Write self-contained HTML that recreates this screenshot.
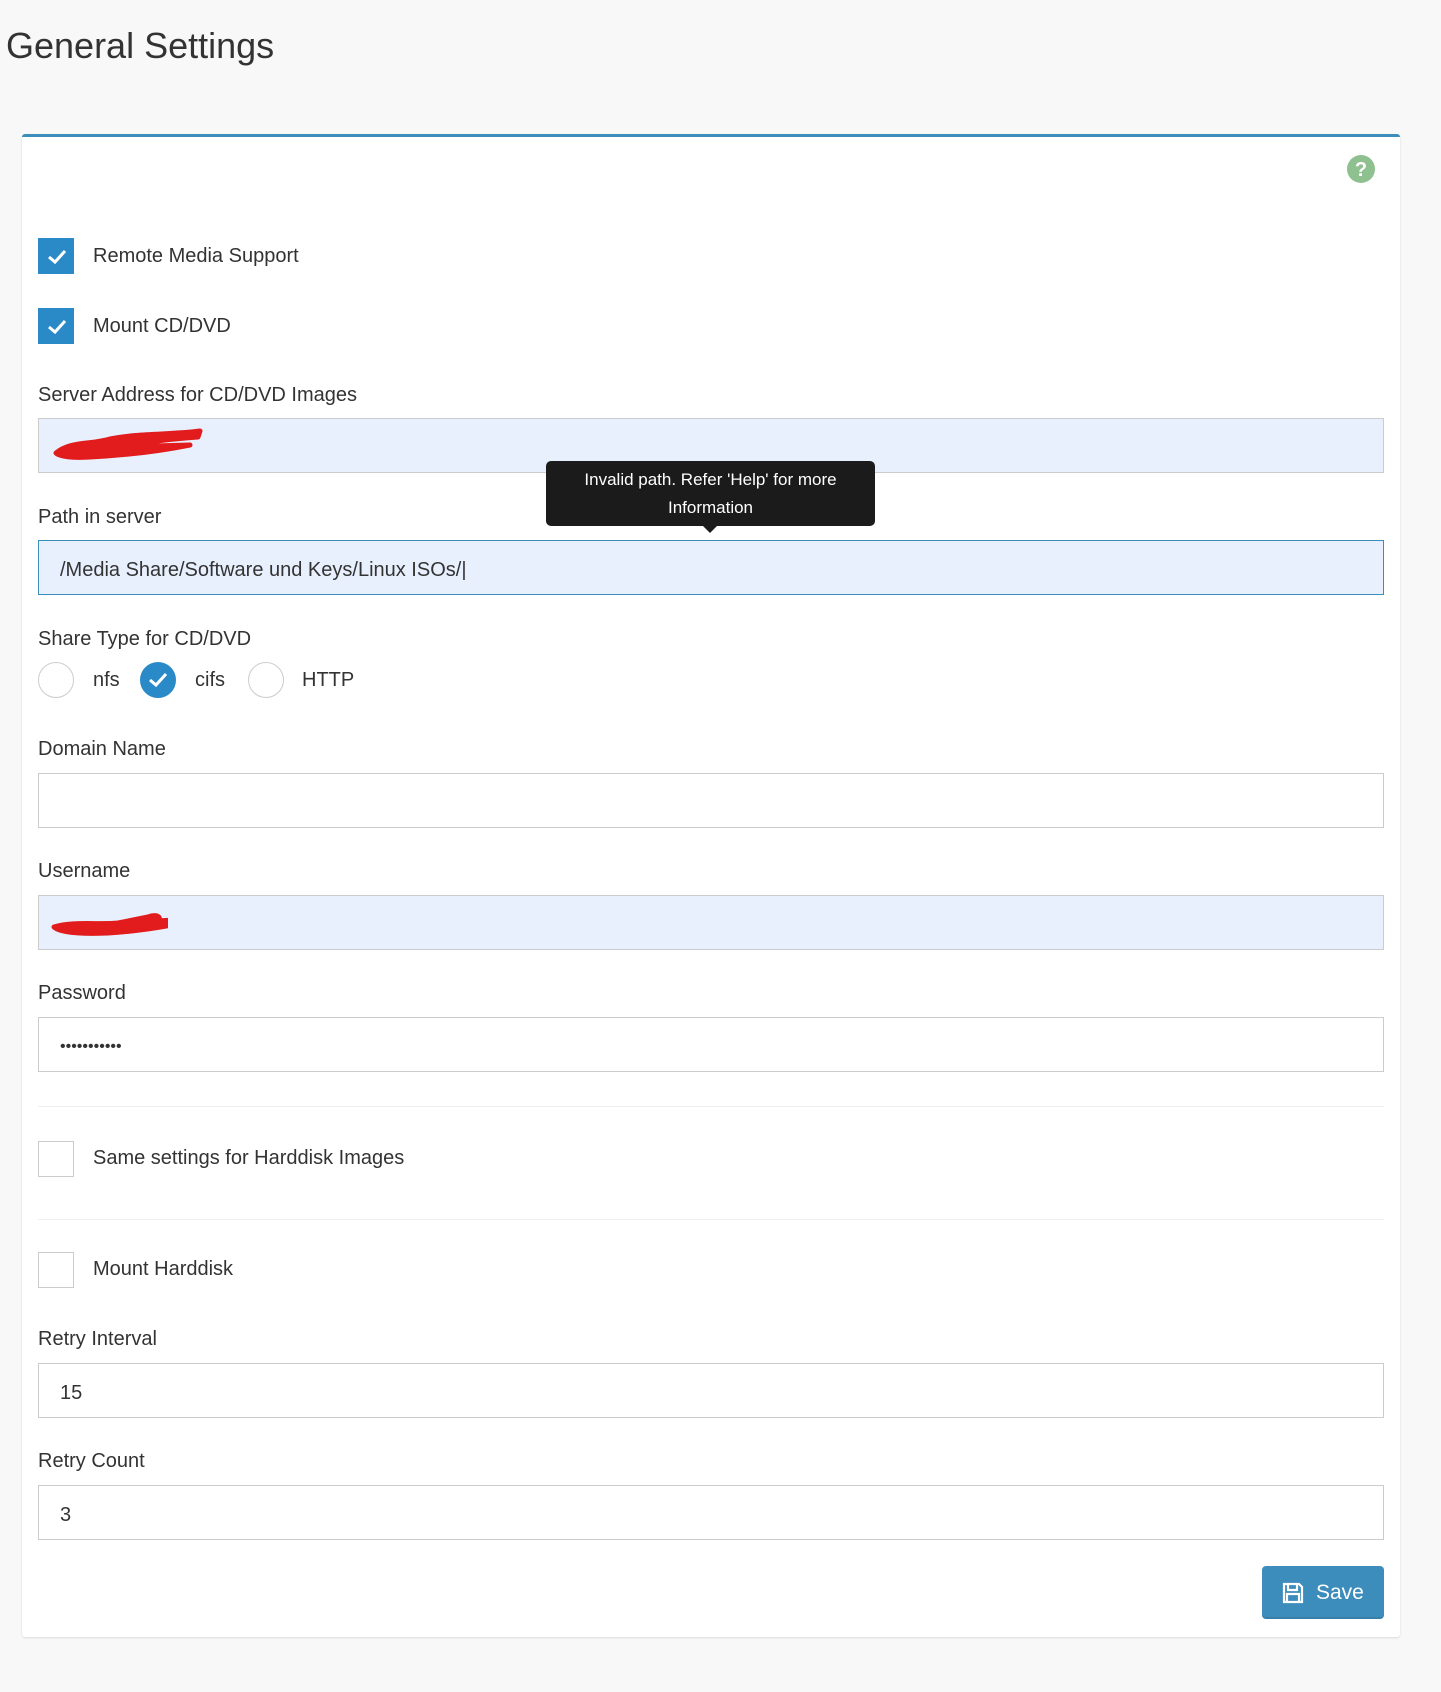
<!DOCTYPE html>
<html><head><meta charset="utf-8"><style>
body{margin:0;width:1441px;height:1692px;background:#f8f8f8;font-family:"Liberation Sans",sans-serif;color:#333;position:relative;overflow:hidden}
.a{position:absolute}
h1{position:absolute;left:6px;top:25px;margin:0;font-weight:normal;font-size:36px;color:#333}
.card{left:22px;top:134px;width:1378px;height:1503px;background:#fff;border-top:3px solid #3c8dbc;border-radius:3px;box-shadow:0 1px 2px rgba(0,0,0,.12);box-sizing:border-box}
.lbl{font-size:20px;color:#333;line-height:24px}
.cb{width:36px;height:36px;box-sizing:border-box;border:1px solid #ccc;background:#fff}
.cb.on{background:#2a8ac8;border-color:#2a8ac8}
.in{left:38px;width:1346px;height:55px;box-sizing:border-box;border:1px solid #ccc;background:#fff;font-size:20px;padding-left:21px;line-height:58px}
.blue{background:#e8f0fe}
.rd{width:36px;height:36px;border-radius:50%;border:1px solid #ccc;box-sizing:border-box;background:#fff}
.hr{left:38px;width:1346px;height:1px;background:#eee}
</style></head><body>
<h1>General Settings</h1>
<div class="a card"></div>
<svg class="a" style="left:1347px;top:155px" width="28" height="28" viewBox="0 0 28 28"><circle cx="14" cy="14" r="14" fill="#8fc08f"/><text x="14" y="21" font-size="20" font-weight="bold" fill="#fff" text-anchor="middle" font-family="Liberation Sans">?</text></svg>

<div class="a cb on" style="left:38px;top:238px"><svg width="36" height="36"><path d="M10 18l6 5 10-11" stroke="#fff" stroke-width="3" fill="none"/></svg></div>
<div class="a lbl" style="left:93px;top:244px">Remote Media Support</div>
<div class="a cb on" style="left:38px;top:308px"><svg width="36" height="36"><path d="M10 18l6 5 10-11" stroke="#fff" stroke-width="3" fill="none"/></svg></div>
<div class="a lbl" style="left:93px;top:314px">Mount CD/DVD</div>

<div class="a lbl" style="left:38px;top:383px">Server Address for CD/DVD Images</div>
<div class="a in blue" style="top:418px"></div>
<svg class="a" style="left:50px;top:425px" width="160" height="40"><path d="M6 28 C20 16,40 20,60 14 C90 8,120 10,150 6 L148 12 C120 14,90 18,70 22 L140 20 C110 26,80 30,40 32 C25 33,10 32,6 28Z" fill="#e21c1c" stroke="#e21c1c" stroke-width="5" stroke-linejoin="round"/></svg>

<div class="a lbl" style="left:38px;top:505px">Path in server</div>
<div class="a in blue" style="top:540px;border-color:#3c8dbc">/Media Share/Software und Keys/Linux ISOs/|</div>

<div class="a" style="left:546px;top:461px;width:329px;height:65px;background:#1b1b1b;border-radius:5px;color:#fff;font-size:17px;line-height:28px;text-align:center;padding-top:5px;box-sizing:border-box">Invalid path. Refer 'Help' for more<br>Information</div>
<div class="a" style="left:703px;top:526px;width:0;height:0;border-left:7px solid transparent;border-right:7px solid transparent;border-top:7px solid #1b1b1b"></div>

<div class="a lbl" style="left:38px;top:627px">Share Type for CD/DVD</div>
<div class="a rd" style="left:38px;top:662px"></div>
<div class="a lbl" style="left:93px;top:668px">nfs</div>
<div class="a rd" style="left:140px;top:662px;background:#2a8ac8;border-color:#2a8ac8"><svg width="36" height="36" style="position:absolute;left:-1px;top:-1px"><path d="M10 18l6 5 10-11" stroke="#fff" stroke-width="3" fill="none"/></svg></div>
<div class="a lbl" style="left:195px;top:668px">cifs</div>
<div class="a rd" style="left:248px;top:662px"></div>
<div class="a lbl" style="left:302px;top:668px">HTTP</div>

<div class="a lbl" style="left:38px;top:737px">Domain Name</div>
<div class="a in" style="top:773px"></div>
<div class="a lbl" style="left:38px;top:859px">Username</div>
<div class="a in blue" style="top:895px"></div>
<svg class="a" style="left:48px;top:903px" width="120" height="40"><path d="M6 24 C25 18,50 22,70 20 L100 14 C110 10,115 16,108 18 L150 16 C120 24,90 28,60 30 C35 31,12 30,6 24Z" fill="#e21c1c" stroke="#e21c1c" stroke-width="5" stroke-linejoin="round"/></svg>
<div class="a lbl" style="left:38px;top:981px">Password</div>
<div class="a in" style="top:1017px;font-size:16px">•••••••••••</div>

<div class="a hr" style="top:1106px"></div>
<div class="a cb" style="left:38px;top:1141px"></div>
<div class="a lbl" style="left:93px;top:1146px">Same settings for Harddisk Images</div>
<div class="a hr" style="top:1219px"></div>
<div class="a cb" style="left:38px;top:1252px"></div>
<div class="a lbl" style="left:93px;top:1257px">Mount Harddisk</div>

<div class="a lbl" style="left:38px;top:1327px">Retry Interval</div>
<div class="a in" style="top:1363px">15</div>
<div class="a lbl" style="left:38px;top:1449px">Retry Count</div>
<div class="a in" style="top:1485px">3</div>

<div class="a" style="left:1262px;top:1566px;width:122px;height:53px;background:#3c8dbc;border-radius:4px;border-bottom:2px solid #367fa9;box-sizing:border-box;color:#fff;font-size:21px;line-height:53px">
<svg style="position:absolute;left:20px;top:16px" width="22" height="22" viewBox="0 0 22 22"><path d="M2 2h15l3 3v15H2z M6 2v6h9V2 M5 20v-8h12v8" fill="none" stroke="#fff" stroke-width="2.2"/></svg>
<span style="position:absolute;left:54px">Save</span></div>
</body></html>
